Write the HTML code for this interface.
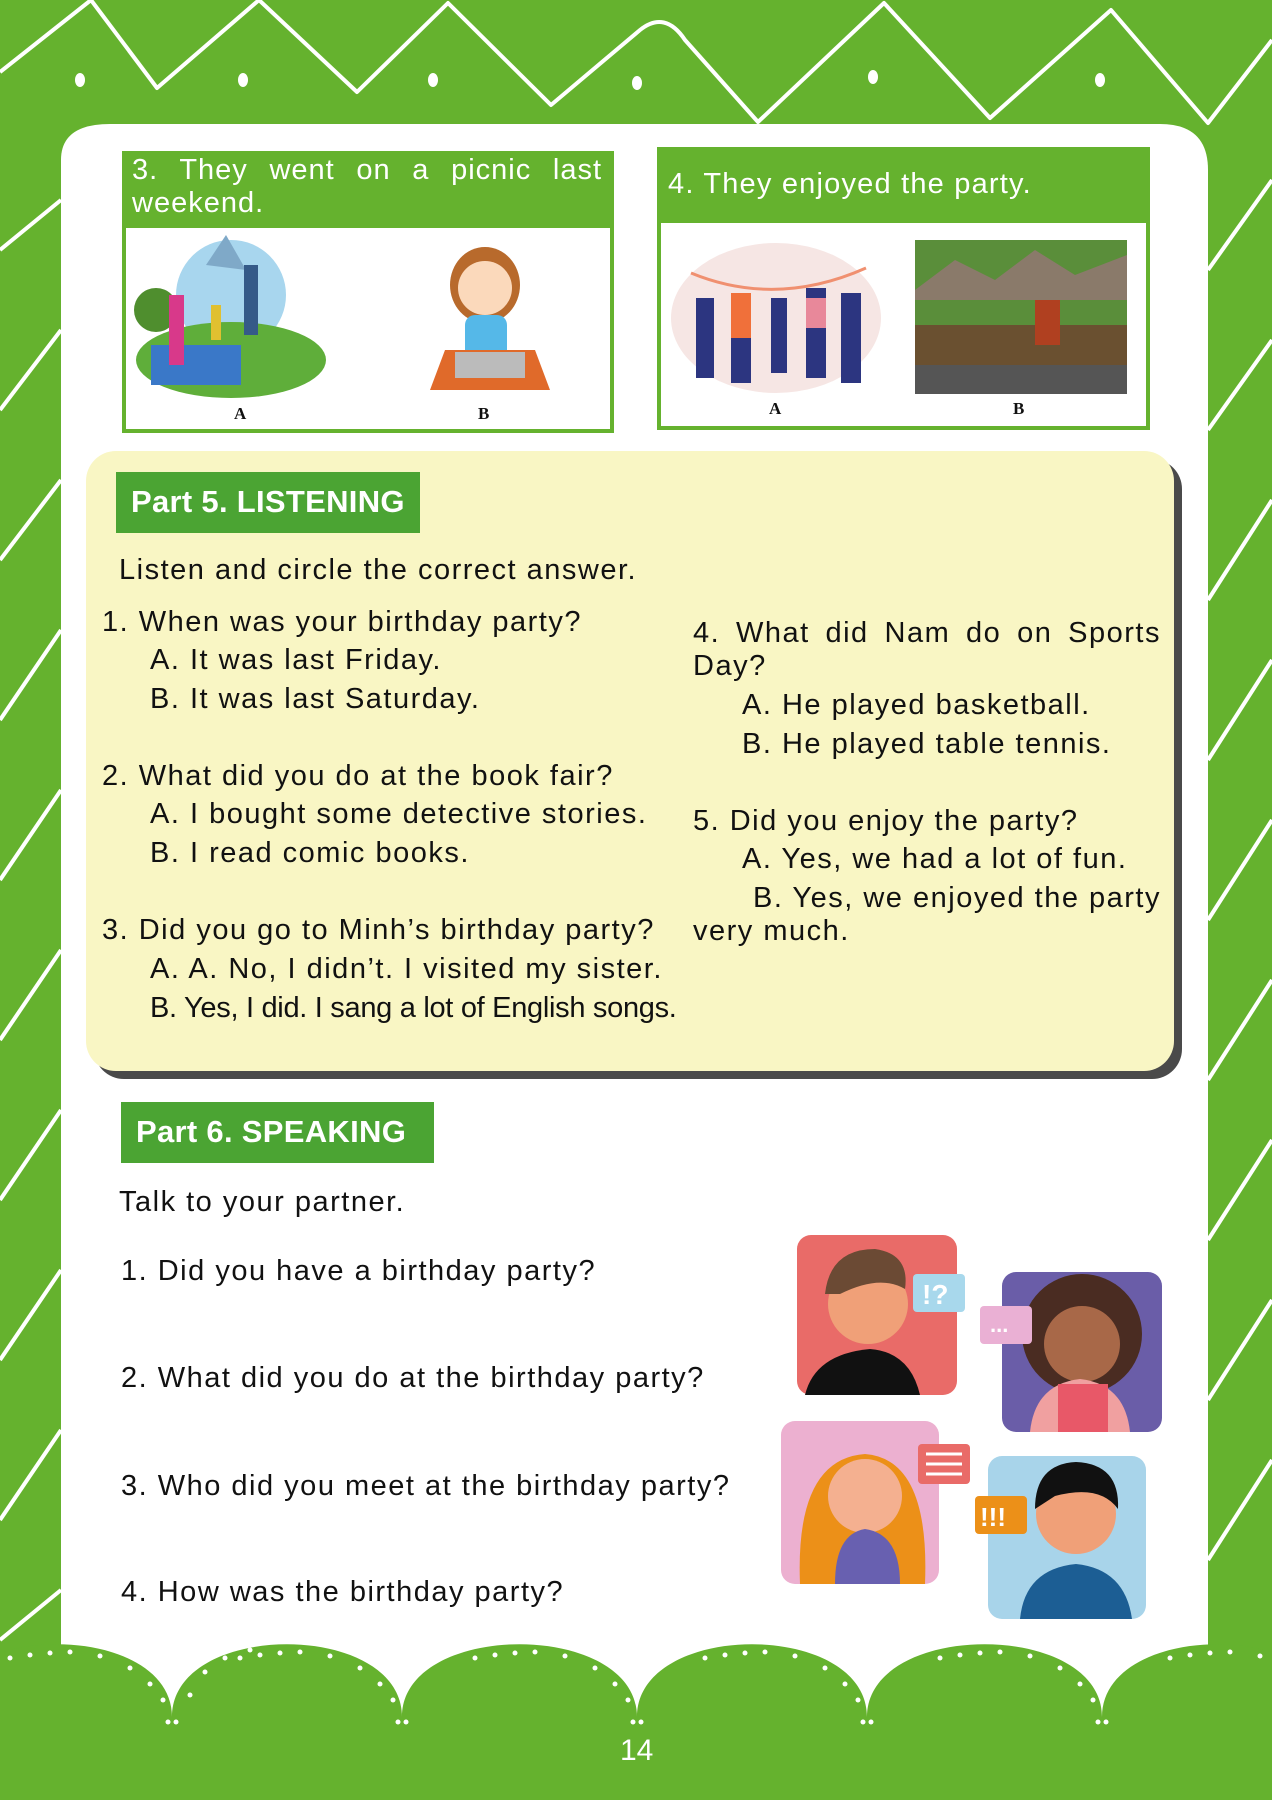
<!DOCTYPE html>
<html><head><meta charset="utf-8"><style>
*{margin:0;padding:0;box-sizing:border-box}
body{width:1272px;height:1800px;background:#65b22e;position:relative;overflow:hidden;font-family:"Liberation Sans",sans-serif;color:#111}
.a{position:absolute;white-space:nowrap}
.t{font-size:29px;letter-spacing:1.5px}
.j{white-space:normal;text-align:justify;text-align-last:justify}
.lbl{position:absolute;background:#4ba433;color:#fff;font-weight:bold;font-size:31px;padding-left:15px;line-height:60px;letter-spacing:0.3px}
</style></head><body>
<svg class="a" style="left:0;top:0" width="1272" height="1800">
<g stroke="#fff" stroke-width="4" fill="none" stroke-linejoin="round">
<path d="M0,72 L91,0 L157,88 L259,0 L357,92 L448,3 L551,105 L640,30 Q665,10 685,40 L758,122 L884,3 L990,118 L1111,10 L1208,123 L1272,40"/>
<line x1="61" y1="200" x2="0" y2="250"/><line x1="61" y1="330" x2="0" y2="410"/><line x1="61" y1="480" x2="0" y2="560"/><line x1="61" y1="630" x2="0" y2="720"/><line x1="61" y1="790" x2="0" y2="880"/><line x1="61" y1="950" x2="0" y2="1040"/><line x1="61" y1="1110" x2="0" y2="1200"/><line x1="61" y1="1270" x2="0" y2="1360"/><line x1="61" y1="1430" x2="0" y2="1520"/><line x1="61" y1="1590" x2="0" y2="1640"/>
<line x1="1272" y1="180" x2="1208" y2="270"/><line x1="1272" y1="340" x2="1208" y2="430"/><line x1="1272" y1="500" x2="1208" y2="600"/><line x1="1272" y1="660" x2="1208" y2="760"/><line x1="1272" y1="820" x2="1208" y2="920"/><line x1="1272" y1="980" x2="1208" y2="1080"/><line x1="1272" y1="1140" x2="1208" y2="1240"/><line x1="1272" y1="1300" x2="1208" y2="1400"/><line x1="1272" y1="1460" x2="1208" y2="1560"/>
</g>
<g fill="#fff"><ellipse cx="80" cy="80" rx="5" ry="7"/><ellipse cx="243" cy="80" rx="5" ry="7"/><ellipse cx="433" cy="80" rx="5" ry="7"/><ellipse cx="637" cy="83" rx="5" ry="7"/><ellipse cx="873" cy="77" rx="5" ry="7"/><ellipse cx="1100" cy="80" rx="5" ry="7"/></g>
<path d="M61,1720 L61,160 Q61,124 110,124 L1160,124 Q1208,124 1208,170 L1208,1720 Z" fill="#fff"/>
<path d="M-58,1717 C-58,1620 172,1620 172,1717 C172,1620 402,1620 402,1717 C402,1620 637,1620 637,1717 C637,1620 867,1620 867,1717 C867,1620 1102,1620 1102,1717 C1102,1620 1332,1620 1332,1717 L1332,1800 L-58,1800 Z" fill="#65b22e"/>
<g fill="#fff" id="dots">
<circle cx="10" cy="1658" r="2.5"/><circle cx="30" cy="1655" r="2.5"/><circle cx="50" cy="1653" r="2.5"/><circle cx="70" cy="1652" r="2.5"/><circle cx="100" cy="1656" r="2.5"/><circle cx="130" cy="1668" r="2.5"/><circle cx="150" cy="1684" r="2.5"/><circle cx="163" cy="1700" r="2.5"/><circle cx="168" cy="1722" r="2.5"/><circle cx="176" cy="1722" r="2.5"/>
</g>
<use href="#dots" x="230"/><use href="#dots" x="465"/><use href="#dots" x="695"/><use href="#dots" x="930"/><use href="#dots" x="1160"/>
<g fill="#fff"><circle cx="190" cy="1695" r="2.5"/><circle cx="205" cy="1672" r="2.5"/><circle cx="225" cy="1658" r="2.5"/><circle cx="250" cy="1650" r="2.5"/></g>
</svg>

<!-- box 1 -->
<div class="a" style="left:122px;top:151px;width:492px;height:282px;border:4px solid #65b22e;background:#fff"></div>
<div class="a" style="left:122px;top:151px;width:492px;height:77px;background:#65b22e"></div>
<div class="a j" style="left:132px;top:154px;width:470px;color:#fff;font-size:29px;line-height:33px;letter-spacing:1px">3. They went on a picnic last</div>
<div class="a" style="left:132px;top:187px;color:#fff;font-size:29px;line-height:33px;letter-spacing:1px">weekend.</div>
<svg class="a" style="left:126px;top:235px" width="210" height="165"><circle cx="105" cy="60" r="55" fill="#a8d6ee"/><polygon points="80,30 100,0 120,35" fill="#7fa9c8"/><ellipse cx="105" cy="125" rx="95" ry="38" fill="#5fae3a"/><rect x="25" y="110" width="90" height="40" fill="#3a78c8"/><circle cx="30" cy="75" r="22" fill="#4f8e2e"/><rect x="43" y="60" width="15" height="70" fill="#d8398a"/><rect x="118" y="30" width="14" height="70" fill="#355a88"/><rect x="85" y="70" width="10" height="35" fill="#e0c030"/></svg>
<svg class="a" style="left:410px;top:240px" width="160" height="158"><ellipse cx="75" cy="45" rx="35" ry="38" fill="#b86a2c"/><circle cx="75" cy="48" r="27" fill="#fbd9bb"/><rect x="55" y="75" width="42" height="50" rx="10" fill="#55b8e8"/><polygon points="20,150 140,150 125,110 35,110" fill="#e06a2a"/><rect x="45" y="112" width="70" height="26" fill="#bbb"/></svg>
<div class="a" style="left:234px;top:404px;font:bold 17px 'Liberation Serif',serif">A</div>
<div class="a" style="left:478px;top:404px;font:bold 17px 'Liberation Serif',serif">B</div>

<!-- box 2 -->
<div class="a" style="left:657px;top:147px;width:493px;height:283px;border:4px solid #65b22e;background:#fff"></div>
<div class="a" style="left:657px;top:147px;width:493px;height:76px;background:#65b22e"></div>
<div class="a" style="left:668px;top:168px;color:#fff;font-size:29px;letter-spacing:1.2px">4. They enjoyed the party.</div>
<svg class="a" style="left:666px;top:238px" width="220" height="155"><ellipse cx="110" cy="80" rx="105" ry="75" fill="#f6e6e4"/><path d="M25,35 Q110,70 200,30" stroke="#f09070" stroke-width="3" fill="none"/><g fill="#2c3580"><rect x="30" y="60" width="18" height="80"/><rect x="65" y="55" width="20" height="90"/><rect x="105" y="60" width="16" height="75"/><rect x="140" y="50" width="20" height="90"/><rect x="175" y="55" width="20" height="90"/></g><rect x="65" y="55" width="20" height="45" fill="#f0703a"/><rect x="140" y="60" width="20" height="30" fill="#e8889a"/></svg>
<svg class="a" style="left:915px;top:240px" width="212" height="154"><rect width="212" height="154" fill="#5a8e3a"/><polygon points="0,50 40,20 80,40 120,10 160,35 212,15 212,60 0,60" fill="#8a7a6a"/><rect y="85" width="212" height="40" fill="#6a5030"/><rect y="125" width="212" height="29" fill="#555"/><rect x="120" y="60" width="25" height="45" fill="#b04020"/></svg>
<div class="a" style="left:769px;top:399px;font:bold 17px 'Liberation Serif',serif">A</div>
<div class="a" style="left:1013px;top:399px;font:bold 17px 'Liberation Serif',serif">B</div>

<!-- yellow panel -->
<div class="a" style="left:94px;top:459px;width:1088px;height:620px;border-radius:30px;background:#4a4a4a"></div>
<div class="a" style="left:86px;top:451px;width:1088px;height:620px;border-radius:30px;background:#f9f6c4"></div>
<div class="lbl" style="left:116px;top:472px;width:304px;height:61px">Part 5. LISTENING</div>
<div class="a t" style="left:119px;top:554px">Listen and circle the correct answer.</div>
<div class="a t" style="left:102px;top:606px">1. When was your birthday party?</div>
<div class="a t" style="left:150px;top:644px">A. It was last Friday.</div>
<div class="a t" style="left:150px;top:683px">B. It was last Saturday.</div>
<div class="a t" style="left:102px;top:760px">2. What did you do at the book fair?</div>
<div class="a t" style="left:150px;top:798px">A. I bought some detective stories.</div>
<div class="a t" style="left:150px;top:837px">B. I read comic books.</div>
<div class="a t" style="left:102px;top:914px">3. Did you go to Minh’s birthday party?</div>
<div class="a t" style="left:150px;top:953px">A. A. No, I didn’t. I visited my sister.</div>
<div class="a t" style="left:150px;top:992px;letter-spacing:-0.3px">B. Yes, I did. I sang a lot of English songs.</div>
<div class="a t j" style="left:693px;top:617px;width:468px">4. What did Nam do on Sports</div>
<div class="a t" style="left:693px;top:650px">Day?</div>
<div class="a t" style="left:742px;top:689px">A. He played basketball.</div>
<div class="a t" style="left:742px;top:728px">B. He played table tennis.</div>
<div class="a t" style="left:693px;top:805px">5. Did you enjoy the party?</div>
<div class="a t" style="left:742px;top:843px">A. Yes, we had a lot of fun.</div>
<div class="a t j" style="left:753px;top:882px;width:408px">B. Yes, we enjoyed the party</div>
<div class="a t" style="left:693px;top:915px">very much.</div>

<!-- part 6 -->
<div class="lbl" style="left:121px;top:1102px;width:313px;height:61px">Part 6. SPEAKING</div>
<div class="a t" style="left:119px;top:1186px">Talk to your partner.</div>
<div class="a t" style="left:121px;top:1255px">1. Did you have a birthday party?</div>
<div class="a t" style="left:121px;top:1362px">2. What did you do at the birthday party?</div>
<div class="a t" style="left:121px;top:1470px">3. Who did you meet at the birthday party?</div>
<div class="a t" style="left:121px;top:1576px">4. How was the birthday party?</div>

<svg class="a" style="left:780px;top:1234px" width="390" height="395">
<rect x="17" y="1" width="160" height="160" rx="14" fill="#e96b68"/>
<circle cx="88" cy="70" r="40" fill="#f0a078"/><path d="M45,60 Q50,15 95,15 Q130,20 125,55 Q100,40 60,60Z" fill="#6b4a34"/><path d="M25,161 Q35,120 90,115 Q130,118 140,161Z" fill="#111"/>
<rect x="133" y="40" width="52" height="38" rx="4" fill="#a8d8ec"/><text x="142" y="70" font-family="Liberation Sans" font-weight="bold" font-size="28" fill="#fff">!?</text>
<rect x="222" y="38" width="160" height="160" rx="14" fill="#6a5da8"/>
<circle cx="302" cy="100" r="60" fill="#4a2c22"/><circle cx="302" cy="110" r="38" fill="#a86848"/><path d="M250,198 Q255,150 300,145 Q345,150 350,198Z" fill="#f0a0a0"/><rect x="278" y="150" width="50" height="48" fill="#e85868"/>
<rect x="200" y="72" width="52" height="38" rx="4" fill="#eab0d4"/><text x="210" y="98" font-family="Liberation Sans" font-weight="bold" font-size="22" fill="#fff">...</text>
<rect x="1" y="187" width="158" height="163" rx="14" fill="#ecb0d0"/>
<path d="M20,350 Q15,225 85,220 Q150,225 145,350Z" fill="#ec9018"/><circle cx="85" cy="262" r="37" fill="#f4b090"/><path d="M55,350 Q55,300 85,295 Q120,300 120,350Z" fill="#6860b0"/>
<rect x="138" y="210" width="52" height="40" rx="4" fill="#e96b68"/><g stroke="#fff" stroke-width="3"><line x1="146" y1="220" x2="182" y2="220"/><line x1="146" y1="230" x2="182" y2="230"/><line x1="146" y1="240" x2="182" y2="240"/></g>
<rect x="208" y="222" width="158" height="163" rx="14" fill="#a8d4ea"/>
<circle cx="296" cy="280" r="40" fill="#f0a078"/><path d="M255,275 Q255,230 296,228 Q340,230 338,275 Q320,250 275,262Z" fill="#111"/><path d="M240,385 Q245,335 296,330 Q345,335 352,385Z" fill="#1c5e94"/>
<rect x="195" y="262" width="52" height="38" rx="4" fill="#ec9018"/><text x="200" y="292" font-family="Liberation Sans" font-weight="bold" font-size="26" fill="#fff">!!!</text>
</svg>

<div class="a" style="left:620px;top:1734px;color:#fff;font-size:30px">14</div>
</body></html>
